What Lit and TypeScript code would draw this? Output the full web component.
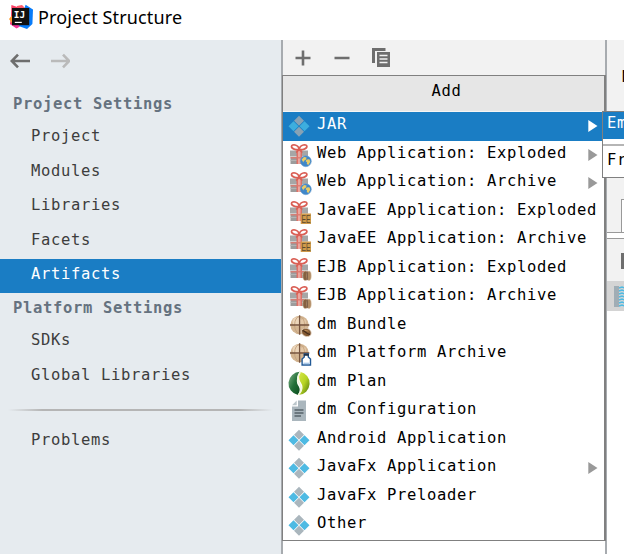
import { LitElement, html, css, svg, nothing } from "lit";
import { customElement, property } from "lit/decorators.js";

type Item = { label: string; icon: string; sub?: boolean; selected?: boolean };

const ITEMS: Item[] = [
  { label: "JAR", icon: "artifact", sub: true, selected: true },
  { label: "Web Application: Exploded", icon: "web", sub: true },
  { label: "Web Application: Archive", icon: "web", sub: true },
  { label: "JavaEE Application: Exploded", icon: "ee" },
  { label: "JavaEE Application: Archive", icon: "ee" },
  { label: "EJB Application: Exploded", icon: "ejb" },
  { label: "EJB Application: Archive", icon: "ejb" },
  { label: "dm Bundle", icon: "bundle" },
  { label: "dm Platform Archive", icon: "platform" },
  { label: "dm Plan", icon: "plan" },
  { label: "dm Configuration", icon: "doc" },
  { label: "Android Application", icon: "artifact" },
  { label: "JavaFx Application", icon: "artifact", sub: true },
  { label: "JavaFx Preloader", icon: "artifact" },
  { label: "Other", icon: "artifact" },
];

const gift = svg`
  <rect x="3" y="9.5" width="18" height="5.5" fill="#a6a6a6"/>
  <rect x="3.5" y="16" width="17" height="7" fill="#9c9c9c"/>
  <path d="M3.5 19.5h17" stroke="#b4b4b4"/>
  <path d="M3 15.5h18" stroke="#cfcfcf"/>
  <rect x="10" y="9" width="4.4" height="14" fill="#eba79f"/>
  <path d="M10.2 9v14M14.2 9v14" stroke="#df6459" stroke-width="1.2"/>
  <path d="M3.5 16.8h17" stroke="#dd7a70" stroke-width="1.3"/>
  <path d="M12.2 8.6C9 9 4.3 8 4.5 5.3C4.7 3 11.4 3 12.2 8.6C13 3 19.7 3 19.9 5.3C20 8 15.4 9 12.2 8.6Z" fill="#fff" stroke="#da5f55" stroke-width="1.7"/>
  <path d="M12 9L9 11.5M12.4 9L15.4 11.5" stroke="#dc5f55" stroke-width="1.4"/>`;

const ball = svg`
  <circle cx="12.6" cy="13" r="9.2" fill="#d3b592"/>
  <circle cx="10" cy="9.8" r="4.5" fill="#ecd6bb"/>
  <circle cx="16.3" cy="9.8" r="2.8" fill="#e3c8a8"/>
  <ellipse cx="12.6" cy="13" rx="5" ry="8.5" fill="none" stroke="#c39f7a" stroke-width=".8"/>
  <path d="M12.6 3.2v19.5M3 13h19.3" stroke="#76533e" stroke-width="1.3"/>`;

const ICONS: Record<string, unknown> = {
  artifact: svg`
    <path class="grey" d="M12 3.7l5 5-5 5-5-5zM12 14.7l5 5-5 5-5-5z"/>
    <path class="cyan" d="M6.5 9.2l5 5-5 5-5-5zM17.5 9.2l5 5-5 5-5-5z"/>`,
  web: svg`${gift}
    <circle cx="18.8" cy="20.2" r="5.5" fill="#3f87c9" stroke="#6c9fd0" stroke-width=".6"/>
    <path d="M14.6 18.4l2.4-2.4 2.6.4-.6 2.2-2.2 1.4-.4 1.6z" fill="#e9cb65"/>
    <path d="M19.6 18.6l2.8-.4.9 2.5-1.9 3.4-1.6-1.2.2-1.6-1.4-1z" fill="#e9cb65"/>`,
  ee: svg`${gift}
    <rect x="13.7" y="15.5" width="10.3" height="10.5" fill="#d09a4b"/>
    <text x="14.5" y="24.6" font-size="10.5" textLength="9" lengthAdjust="spacingAndGlyphs" letter-spacing="0" font-family="Liberation Sans, sans-serif" fill="#5d492f">EE</text>`,
  ejb: svg`${gift}
    <ellipse cx="18.4" cy="20.8" rx="2.6" ry="4.7" fill="#86603f" stroke="#d7c0a4" stroke-width=".6"/>
    <ellipse cx="22" cy="20.8" rx="2.2" ry="4.7" fill="#b08a62" stroke="#d7c0a4" stroke-width=".6"/>
    <path d="M20.3 16.6v8.6" stroke="#5e4432" stroke-width=".8"/>`,
  bundle: svg`${ball}
    <ellipse cx="19.4" cy="20.4" rx="5" ry="4" transform="rotate(25 19.4 20.4)" fill="#845a33" stroke="#e4d5c4" stroke-width=".7"/>
    <path d="M15.5 18.6c3 0 3 3.4 7.5 3.8" fill="none" stroke="#3f2919" stroke-width="1.1"/>
    <path d="M17.5 18.2l4 1" stroke="#bd8f5b"/>`,
  platform: svg`${ball}
    <path d="M17.3 14h4v3l2.2 2v6h-8.4v-6l2.2-2z" fill="#fff" stroke="#225a96" stroke-width="1.4"/>
    <path d="M16.8 13.8h5v2h-5z" fill="#24364b"/>
    <path d="M16.4 23.4h6" stroke="#a9c8e8" stroke-width="1.5"/>`,
  plan: svg`
    <defs>
      <linearGradient id="dark" x1="0" y1="0" x2="1" y2="1"><stop offset="0" stop-color="#87b58c"/><stop offset=".5" stop-color="#24713a"/><stop offset="1" stop-color="#0a4b1b"/></linearGradient>
      <linearGradient id="lime" x1="0" y1="0" x2="1" y2="1"><stop offset="0" stop-color="#d9e84a"/><stop offset=".5" stop-color="#b6d324"/><stop offset="1" stop-color="#456e0b"/></linearGradient>
    </defs>
    <path d="M13 2.8A11.7 11.7 0 0 0 11 26C13.5 22 13 19 11 16.2C8.8 12.5 10 7 13 2.8Z" fill="url(#dark)"/>
    <path d="M13 2.8A11.7 11.7 0 0 1 11.5 26C16.5 22 16.3 17 13.8 13.5C11.5 10 12 6 13 2.8Z" fill="url(#lime)"/>
    <path d="M13.2 3C10.7 7 10 11.7 12.4 14.8C15 18.3 14.5 22.5 11.3 26" fill="none" stroke="#f4f7df" stroke-width="1.7"/>`,
  doc: svg`
    <path d="M11 3.5h8v20.5H5V9.5h6z" fill="#aab6bd"/>
    <path d="M9.7 3.5v4.8H5z" fill="#bcc6cb"/>
    <path d="M7.5 13h9M7.5 16h9M7.5 19h6.5" stroke="#57636a" stroke-width="1.4"/>`,
};

@customElement("menu-row")
class MenuRow extends LitElement {
  @property({ attribute: false }) item!: Item;
  static styles = css`
    :host { display: block; height: 28.5px; }
    .row { display: flex; height: 100%; padding-left: 4px; color: #000; }
    .row.selected { height: 28.5px; background: #1a7dc4; color: #fff; }
    .icon { width: 24px; height: 28px; flex: none; overflow: visible; }
    .grey { fill: #aab6bd; }
    .cyan { fill: #4ebae3; }
    .selected .grey { fill: #87a2b5; }
    .selected .cyan { fill: #3daede; }
    .label { margin-left: 6px; line-height: 24px; flex: 1; white-space: pre; }
    .arrow { width: 10px; height: 12px; margin: 8px 6px 0 0; fill: #999; }
    .selected .arrow { fill: #fff; }
  `;
  render() {
    const { label, icon, sub, selected } = this.item;
    return html`<div class="row ${selected ? "selected" : ""}">
      <svg class="icon" viewBox="0 0 24 28">${ICONS[icon]}</svg>
      <span class="label">${label}</span>
      ${sub ? html`<svg class="arrow" viewBox="0 0 10 12"><path d="M.3 0L9.5 6L.3 12z" /></svg>` : nothing}
    </div>`;
  }
}

@customElement("app-root")
class AppRoot extends LitElement {
  static styles = css`
    :host {
      display: flex; flex-direction: column; width: 624px; height: 554px; overflow: hidden; position: relative;
      background: #fff; font: 15.5px "DejaVu Sans Mono", monospace; letter-spacing: 0.668px;
    }
    .title { display: flex; height: 40px; flex: none; padding-left: 8px; }
    .logo { width: 26px; height: 26px; margin-top: 4px; }
    .name { margin-left: 4px; font: 18px/34px "Noto Sans", sans-serif; letter-spacing: 0.14px; color: #000; white-space: pre; }
    .body { display: flex; flex: 1; min-height: 0; }
    .side { width: 281px; flex: none; background: #e6ebef; color: #3d3d3d; }
    .nav { display: flex; gap: 20px; height: 32px; padding: 11px 0 0 10px; }
    .nav svg { width: 20px; height: 20px; fill: none; stroke-width: 2.6; }
    .back { stroke: #6e6e6e; }
    .forward { stroke: #bababa; }
    .head { height: 31.5px; padding-left: 13px; line-height: 28px; font-weight: bold; color: #65727f; box-sizing: border-box; }
    .head.first { height: 38px; padding-top: 7px; }
    .entry { height: 34.5px; line-height: 30px; padding-left: 31px; }
    .entry.on { height: 34px; margin-bottom: .5px; background: #1a7dc4; color: #fff; }
    .rule { height: 2px; margin: 15px 8px 15px; background: linear-gradient(90deg, transparent, #b5b5b5 13%, #b5b5b5 87%, transparent); }
    .rule + .entry { line-height: 29px; }
    .split { width: 2px; flex: none; background: #a7abaf; }
    .main { width: 322px; flex: none; }
    .tools { display: flex; height: 35px; background: #f2f2f2; }
    .tools svg { width: 100px; height: 35px; margin-left: 9px; }
    .menu {
      position: absolute; left: 282px; top: 75px; width: 324px; height: 466px; box-sizing: border-box;
      border: 1px solid #808080; border-right-width: 2px; background: #fff;
    }
    .caption { height: 35px; line-height: 30px; padding-left: 6px; text-align: center; background: #e6e6e6; border-bottom: 1px solid #f5f5f5; color: #000; }
    .submenu {
      position: absolute; left: 602px; top: 111px; width: 90px; height: 67px; box-sizing: border-box;
      border: 1px solid #808080; background: #fff;
    }
    .pick { height: 27px; line-height: 23px; padding-left: 4px; background: #1a7dc4; color: #fff; }
    .line { height: 2px; margin-top: 5px; background: #b5b5b5; }
    .option { padding-left: 4px; line-height: 29px; color: #000; }
    .detail { flex: 1; min-width: 0; overflow: hidden; background: #fff; }
    .form { height: 192px; background: #f2f2f2; border-bottom: 1px solid #999; overflow: hidden; }
    .field { padding-left: 14.7px; line-height: 74px; height: 159px; color: #000; }
    .tab { width: 40px; height: 33px; margin-left: 14px; border: 1px solid #999; background: #fff; }
    .bar { display: flex; height: 42px; margin-top: 5px; border-top: 1px solid #999; background: #f2f2f2; }
    .button { width: 16px; height: 16px; flex: none; margin: 14px 0 0 14px; background: #6e6e6e; }
    .node { height: 30px; background: #d4d4d4; }
    .node svg { display: block; width: 22px; height: 30px; margin-left: 7px; }
  `;
  render() {
    return html`
      <div class="title">
        <svg class="logo" viewBox="0 0 26 26">
          <path d="M3.4 1l6 2-1 10 3 8-2.4 3-7-4 1-8z" fill="#fb3d63" />
          <path d="M1 15l3.4-4 3 9-3.4-1z" fill="#ff9a2c" />
          <path d="M9 2l5-1 4 4-9 1z" fill="#fc5a6a" />
          <path d="M17.6 .8l7.4 4.6-.6 14.6-5.4 5-8.5-3z" fill="#087cfa" />
          <path d="M2 20l7-.5 3 3-3.5 2z" fill="#f5369b" />
          <rect x="4" y="4" width="17.2" height="17.2" fill="#111" />
          <text x="5.8" y="13.8" font-family="DejaVu Sans Mono, monospace" font-size="9.4" font-weight="bold" letter-spacing="0" fill="#fff">IJ</text>
          <path d="M6.8 18.4h7" stroke="#fff" stroke-width="1.2" />
        </svg>
        <span class="name">Project Structure</span>
      </div>
      <div class="body">
        <div class="side">
          <div class="nav">
            <svg class="back" viewBox="0 0 20 20"><path d="M20 10H2M8 3.6L1.8 10L8 16.4" /></svg>
            <svg class="forward" viewBox="0 0 20 20"><path d="M1 10H19M13 3.6L19.2 10L13 16.4" /></svg>
          </div>
          <div class="head first">Project Settings</div>
          ${["Project", "Modules", "Libraries", "Facets", "Artifacts"].map(
            (n) => html`<div class="entry ${n === "Artifacts" ? "on" : ""}">${n}</div>`
          )}
          <div class="head">Platform Settings</div>
          <div class="entry">SDKs</div>
          <div class="entry">Global Libraries</div>
          <div class="rule"></div>
          <div class="entry">Problems</div>
        </div>
        <div class="split"></div>
        <div class="main">
          <div class="tools">
            <svg viewBox="0 0 100 35">
              <path d="M3.5 18h15M11 10.5v15M42.5 18h15" stroke="#6e6e6e" stroke-width="2.6" />
              <path d="M80 8h13.5v3H83v12h-3z" fill="#6e6e6e" />
              <path d="M85 12h13v15H85z" fill="#6e6e6e" />
              <path d="M87.5 15.5h8M87.5 19h8M87.5 22.5h8" stroke="#f2f2f2" stroke-width="1.3" />
            </svg>
          </div>
        </div>
        <div class="split"></div>
        <div class="detail">
          <div class="form"><div class="field">N</div><div class="tab"></div></div>
          <div class="bar"><div class="button"></div></div>
          <div class="node">
            <svg viewBox="0 0 22 30">
              <path d="M0 5h5v21H0z" fill="#a0adb5" />
              <path d="M5 7l3-1 3 1 3-1M5 10l3-1 3 1 3-1M5 13l3-1 3 1 3-1M5 16l3-1 3 1 3-1M5 19l3-1 3 1 3-1M5 22l3-1 3 1 3-1M5 25l3-1 3 1 3-1" fill="none" stroke="#4ebae3" stroke-width="1.4" />
            </svg>
          </div>
        </div>
      </div>
      <div class="menu">
        <div class="caption">Add</div>
        ${ITEMS.map((i) => html`<menu-row .item=${i}></menu-row>`)}
      </div>
      <div class="submenu">
        <div class="pick">Em</div>
        <div class="line"></div>
        <div class="option">Fr</div>
      </div>
    `;
  }
}
